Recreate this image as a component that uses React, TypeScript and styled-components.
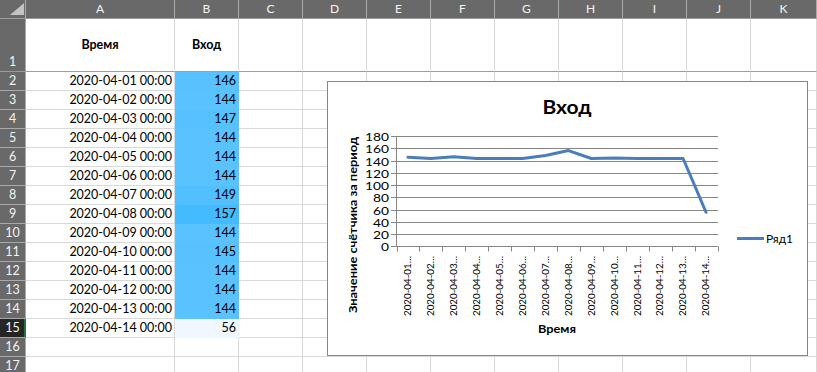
import React from "react";
import styled, { createGlobalStyle } from "styled-components";

const GlobalStyle = createGlobalStyle`
  html, body { margin: 0; padding: 0; background: #ffffff; }
  body { font-family: Lato, "Liberation Sans", sans-serif; overflow: hidden; }
  #root { width: 817px; height: 372px; }
`;

const HEADER_BG = "#696969";
const HEADER_LINE = "#a9a9a9";
const GRID = "#d9d9d9";

const COLS: { key: string; w: number }[] = [
  { key: "A", w: 149 },
  { key: "B", w: 64 },
  { key: "C", w: 64 },
  { key: "D", w: 64 },
  { key: "E", w: 64 },
  { key: "F", w: 64 },
  { key: "G", w: 64 },
  { key: "H", w: 64 },
  { key: "I", w: 64 },
  { key: "J", w: 64 },
  { key: "K", w: 66 },
];

const VALUES = [146, 144, 147, 144, 144, 144, 149, 157, 144, 145, 144, 144, 144, 56];
const DATES = VALUES.map((_, i) => `2020-04-${String(i + 1).padStart(2, "0")}`);

const MIN = 56;
const MAX = 157;
const LOW = [240, 248, 255];
const HIGH = [68, 187, 255];
const fillFor = (v: number) => {
  const t = (v - MIN) / (MAX - MIN);
  const c = LOW.map((l, i) => Math.round(l + (HIGH[i] - l) * t));
  return `rgb(${c[0]}, ${c[1]}, ${c[2]})`;
};

const Page = styled.div`
  position: relative;
  width: 817px;
  height: 372px;
  overflow: hidden;
  background: #ffffff;
`;

const Sheet = styled.div`
  display: grid;
  grid-template-columns: 26px ${COLS.map((c) => `${c.w}px`).join(" ")};
  grid-template-rows: 19px 53px repeat(16, 19px);
  font-size: 12.5px;
  color: #000000;
`;

const Corner = styled.div`
  box-sizing: border-box;
  background: ${HEADER_BG};
  border-right: 1px solid ${HEADER_LINE};
  border-bottom: 1px solid #9b9b9b;
  display: flex;
  align-items: flex-end;
  justify-content: flex-end;
  padding: 0 1px 3px 0;
`;

const CornerTriangle = styled.div`
  width: 14px;
  height: 12px;
  background: #c3c3c3;
  clip-path: polygon(100% 0, 100% 100%, 0 100%);
`;

const ColHead = styled.div`
  box-sizing: border-box;
  background: ${HEADER_BG};
  color: #f4f4f4;
  border-right: 1px solid ${HEADER_LINE};
  border-bottom: 1px solid #9b9b9b;
  display: flex;
  align-items: center;
  justify-content: center;
  font-size: 12px;
  line-height: 18px;
`;

const RowHead = styled.div<{ $active?: boolean; $bottom?: boolean; $strong?: boolean }>`
  box-sizing: border-box;
  background: ${(p) => (p.$active ? "#252525" : HEADER_BG)};
  color: #f4f4f4;
  border-right: 1px solid ${(p) => (p.$active ? "#217346" : HEADER_LINE)};
  box-shadow: ${(p) => (p.$active ? "inset -1px 0 0 #217346" : "none")};
  border-bottom: 1px solid ${(p) => (p.$strong ? "#9b9b9b" : HEADER_LINE)};
  display: flex;
  align-items: ${(p) => (p.$bottom ? "flex-end" : "center")};
  justify-content: center;
  font-size: 12.5px;
  line-height: 18px;
`;

const Cell = styled.div<{ $align?: "left" | "right" | "center"; $fill?: string; $bold?: boolean; $strong?: boolean; $middle?: boolean }>`
  box-sizing: border-box;
  background: ${(p) => p.$fill ?? "#ffffff"};
  border-right: 1px solid ${(p) => p.$fill ?? GRID};
  border-bottom: 1px solid ${(p) => (p.$strong ? "#9e9e9e" : p.$fill ?? GRID)};
  display: flex;
  align-items: ${(p) => (p.$middle ? "center" : "flex-end")};
  justify-content: ${(p) => (p.$align === "right" ? "flex-end" : p.$align === "center" ? "center" : "flex-start")};
  padding: 0 2px 0 2px;
  font-weight: ${(p) => (p.$bold ? 700 : 400)};
  line-height: 18px;
  white-space: nowrap;
  overflow: hidden;
`;

const ChartBox = styled.div`
  position: absolute;
  left: 327px;
  top: 81px;
  width: 481px;
  height: 275px;
  box-sizing: border-box;
  border: 1px solid #868686;
  background: #ffffff;
`;

const ChartSvg = styled.svg`
  display: block;
  font-family: Lato, "Liberation Sans", sans-serif;
`;

const LINE_BLUE = "#4a7ebb";
const AXIS = "#868686";
const xL = 396.5;
const xR = 717.5;
const cw = (xR - xL) / 14;
const GRID_ROWS = [246, 234, 222, 210, 197, 185, 173, 161, 148, 136];
const yOf = (v: number) => 246.5 - v * (110 / 180);

function Chart() {
  const pts = VALUES.map((v, i) => `${(xL + (i + 0.5) * cw).toFixed(2)},${yOf(v).toFixed(2)}`).join(" ");
  return (
    <ChartBox>
      <ChartSvg width={479} height={273} viewBox="0 0 479 273">
        <g transform="translate(-328 -82)">
          <text x={567} y={114} textAnchor="middle" fontSize={19} fontWeight={700} fill="#000" textLength={49} lengthAdjust="spacingAndGlyphs">
            Вход
          </text>

          {GRID_ROWS.map((r, k) => (
            <g key={k}>
              <line x1={391} x2={xR + 0.5} y1={r + 0.5} y2={r + 0.5} stroke={AXIS} strokeWidth={1} />
              <text
                x={389}
                y={r + 4.5}
                textAnchor="end"
                fontSize={11}
                fill="#000"
                textLength={String(k * 20).length * 8}
                lengthAdjust="spacingAndGlyphs"
              >
                {k * 20}
              </text>
            </g>
          ))}
          <line x1={xL} x2={xL} y1={136} y2={247} stroke={AXIS} strokeWidth={1} />

          {Array.from({ length: 15 }, (_, i) => {
            const x = Math.round(xL + i * cw) + 0.5;
            return <line key={i} x1={x} x2={x} y1={246.5} y2={251.5} stroke={AXIS} strokeWidth={1} />;
          })}

          {DATES.map((d, i) => {
            const cx = xL + (i + 0.5) * cw;
            return (
              <text
                key={d}
                transform={`translate(${cx.toFixed(2)} 256) rotate(-90)`}
                x={0}
                y={3.3}
                textAnchor="end"
                fontSize={9}
                fill="#000"
                textLength={60}
                lengthAdjust="spacingAndGlyphs"
              >
                {`${d.slice(0, 10)}…`}
              </text>
            );
          })}

          <polyline points={pts} fill="none" stroke={LINE_BLUE} strokeWidth={3} strokeLinejoin="round" strokeLinecap="round" />

          <text
            transform="translate(357 225) rotate(-90)"
            x={0}
            y={0}
            textAnchor="middle"
            fontSize={12}
            fontWeight={700}
            fill="#000"
            textLength={176}
            lengthAdjust="spacingAndGlyphs"
          >
            Значение счётчика за период
          </text>

          <text x={557} y={333} textAnchor="middle" fontSize={12} fontWeight={700} fill="#000" textLength={38} lengthAdjust="spacingAndGlyphs">
            Время
          </text>

          <line x1={737} x2={764} y1={238.5} y2={238.5} stroke={LINE_BLUE} strokeWidth={3} />
          <text x={766} y={243} fontSize={12} fill="#000" textLength={27} lengthAdjust="spacingAndGlyphs">
            Ряд1
          </text>
        </g>
      </ChartSvg>
    </ChartBox>
  );
}

export default function App() {
  const rows: React.ReactNode[] = [];

  rows.push(
    <React.Fragment key="r1">
      <RowHead $bottom $strong>1</RowHead>
      {COLS.map((c) => (
        <Cell key={c.key} $strong $middle $bold $align="center">
          {c.key === "A" ? "Время" : c.key === "B" ? "Вход" : ""}
        </Cell>
      ))}
    </React.Fragment>
  );

  for (let n = 2; n <= 17; n++) {
    const idx = n - 2;
    const hasData = idx < VALUES.length;
    rows.push(
      <React.Fragment key={`r${n}`}>
        <RowHead $active={n === 15}>{n}</RowHead>
        {COLS.map((c) => {
          if (hasData && c.key === "A") {
            return (
              <Cell key={c.key} $align="right">
                {`${DATES[idx]} 00:00`}
              </Cell>
            );
          }
          if (hasData && c.key === "B") {
            return (
              <Cell key={c.key} $align="right" $fill={fillFor(VALUES[idx])}>
                {VALUES[idx]}
              </Cell>
            );
          }
          return <Cell key={c.key} />;
        })}
      </React.Fragment>
    );
  }

  return (
    <Page>
      <GlobalStyle />
      <Sheet>
        <Corner>
          <CornerTriangle />
        </Corner>
        {COLS.map((c) => (
          <ColHead key={c.key}>{c.key}</ColHead>
        ))}
        {rows}
      </Sheet>
      <Chart />
    </Page>
  );
}
